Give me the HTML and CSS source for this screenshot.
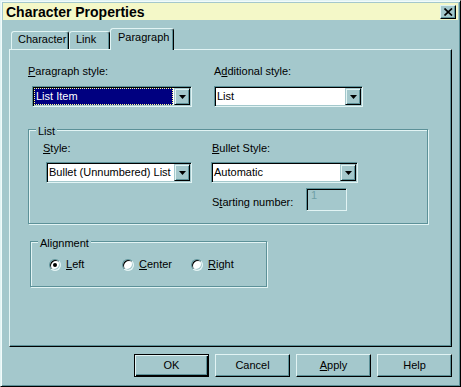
FILE: index.html
```html
<!DOCTYPE html>
<html>
<head>
<meta charset="utf-8">
<title>Character Properties</title>
<link rel="stylesheet" href="styles.css">
</head>
<body>
<div class="window">
  <div class="titlebar">
    <span class="title">Character Properties</span>
    <div class="close">
      <svg width="9" height="8" viewBox="0 0 9 8"><path d="M0.5 0.5 L8 7.5 M8 0.5 L0.5 7.5" stroke="#000" stroke-width="1.7" fill="none"/></svg>
    </div>
  </div>
  <div class="tabs">
    <div class="tab t-char">Character</div>
    <div class="tab t-link">Link</div>
    <div class="tab t-para active">Paragraph</div>
  </div>
  <div class="panel">
    <div class="row1">
      <div class="f-para">
        <div class="label"><u>P</u>aragraph style:</div>
        <div class="combo c-para">
          <span class="combo-text sel">List Item</span>
          <span class="combo-btn"><svg width="7" height="4" viewBox="0 0 7 4"><path d="M0 0 H7 L3.5 4 Z" fill="#000"/></svg></span>
        </div>
      </div>
      <div class="f-add">
        <div class="label">A<u>d</u>ditional style:</div>
        <div class="combo c-add">
          <span class="combo-text">List</span>
          <span class="combo-btn"><svg width="7" height="4" viewBox="0 0 7 4"><path d="M0 0 H7 L3.5 4 Z" fill="#000"/></svg></span>
        </div>
      </div>
    </div>
    <div class="group g-list">
      <span class="group-title">List</span>
      <div class="list-row">
        <div class="f-style">
          <div class="label"><u>S</u>tyle:</div>
          <div class="combo c-style">
            <span class="combo-text">Bullet (Unnumbered) List</span>
            <span class="combo-btn"><svg width="7" height="4" viewBox="0 0 7 4"><path d="M0 0 H7 L3.5 4 Z" fill="#000"/></svg></span>
          </div>
        </div>
        <div class="f-bullet">
          <div class="label"><u>B</u>ullet Style:</div>
          <div class="combo c-bullet">
            <span class="combo-text">Automatic</span>
            <span class="combo-btn"><svg width="7" height="4" viewBox="0 0 7 4"><path d="M0 0 H7 L3.5 4 Z" fill="#000"/></svg></span>
          </div>
          <div class="start-row">
            <div class="label start-label">S<u>t</u>arting number:</div>
            <div class="num">1</div>
          </div>
        </div>
      </div>
    </div>
    <div class="group g-align">
      <span class="group-title">Alignment</span>
      <div class="radios">
        <div class="radio-item ri-left"><span class="radio on"></span><span><u>L</u>eft</span></div>
        <div class="radio-item ri-center"><span class="radio"></span><span><u>C</u>enter</span></div>
        <div class="radio-item"><span class="radio"></span><span><u>R</u>ight</span></div>
      </div>
    </div>
  </div>
  <div class="buttons">
    <div class="btn default">OK</div>
    <div class="btn">Cancel</div>
    <div class="btn"><span><u>A</u>pply</span></div>
    <div class="btn">Help</div>
  </div>
</div>
</body>
</html>
```
FILE: styles.css
```css
:root {
  --face: #a4c8cc;
  --light: #e2f4f4;
  --shadow: #5c9198;
  --dark: #000000;
}

html, body {
  margin: 0;
  background: var(--face);
}

body {
  font-family: "Liberation Sans", Arial, sans-serif;
  font-size: 11px;
  line-height: 13px;
  color: #000;
}

u {
  text-decoration: underline;
  text-underline-offset: 1px;
}

.window {
  width: 461px;
  height: 387px;
  box-sizing: border-box;
  border: 1px solid;
  border-color: var(--light) var(--dark) var(--dark) var(--light);
  box-shadow: inset 1px 1px 0 #f2fbfb, inset -1px -1px 0 var(--shadow);
  padding: 2px;
  display: flex;
  flex-direction: column;
  background: var(--face);
}

.titlebar {
  height: 17px;
  flex: none;
  background: #f4f8c8;
  display: flex;
  align-items: center;
  justify-content: space-between;
  padding: 0 2px 0 3px;
}

.title {
  font-weight: bold;
  font-size: 14px;
  line-height: 17px;
  padding-top: 1px;
}

.close {
  width: 16px;
  height: 14px;
  box-sizing: border-box;
  background: var(--face);
  border: 1px solid;
  border-color: var(--light) var(--dark) var(--dark) var(--light);
  box-shadow: inset -1px -1px 0 var(--shadow);
  display: flex;
  align-items: center;
  justify-content: center;
}

.close svg {
  display: block;
}

.tabs {
  display: flex;
  align-items: flex-end;
  height: 21px;
  flex: none;
  margin-top: 8px;
  padding-left: 8px;
}

.tab {
  box-sizing: border-box;
  height: 18px;
  padding: 1px 0 0 6px;
  border: 1px solid;
  border-bottom: none;
  border-color: var(--light) var(--dark) transparent var(--light);
  border-radius: 3px 3px 0 0;
  box-shadow: inset -1px 0 0 var(--shadow);
  background: var(--face);
}

.t-char {
  width: 58px;
}

.t-link {
  width: 41px;
}

.t-para {
  width: 64px;
  height: 22px;
  margin-bottom: -1px;
  padding: 2px 0 0 7px;
  position: relative;
  z-index: 1;
}

.panel {
  margin: 0 6px;
  height: 298px;
  flex: none;
  box-sizing: border-box;
  border: 1px solid;
  border-color: var(--light) var(--dark) var(--dark) var(--light);
  box-shadow: inset -1px -1px 0 var(--shadow);
  padding: 15px 0 0 18px;
}

.row1 {
  display: flex;
}

.f-para {
  width: 186px;
}

.label {
  white-space: nowrap;
}

.combo {
  display: flex;
  height: 21px;
  box-sizing: border-box;
  border: 1px solid;
  border-color: var(--shadow) var(--light) var(--light) var(--shadow);
  box-shadow: inset 1px 1px 0 var(--dark), inset -1px -1px 0 var(--face);
  background: #fff;
  padding: 1px;
}

.combo-text {
  flex: 1;
  min-width: 0;
  padding-left: 1px;
  line-height: 17px;
  white-space: nowrap;
  overflow: hidden;
}

.combo-text.sel {
  background: #000080;
  color: #fff;
  border: 1px dotted #ffff90;
  line-height: 15px;
  padding-left: 1px;
  margin-right: 1px;
}

.combo-btn {
  width: 16px;
  height: 17px;
  flex: none;
  box-sizing: border-box;
  background: var(--face);
  border: 1px solid;
  border-color: var(--face) var(--dark) var(--dark) var(--face);
  box-shadow: inset 1px 1px 0 var(--light), inset -1px -1px 0 var(--shadow);
  display: flex;
  align-items: center;
  justify-content: center;
}

.combo-btn svg {
  display: block;
}

.c-para {
  width: 160px;
  margin: 8px 0 0 4px;
}

.c-add {
  width: 149px;
  margin-top: 8px;
}

.group {
  position: relative;
  box-sizing: border-box;
  border: 1px solid var(--shadow);
  box-shadow: inset 1px 1px 0 var(--light), 1px 1px 0 var(--light);
}

.group-title {
  position: absolute;
  top: -5px;
  left: 7px;
  padding: 0 2px;
  background: var(--face);
  line-height: 13px;
}

.g-list {
  margin-top: 22px;
  width: 400px;
  height: 95px;
  padding: 12px 0 0 14px;
}

.list-row {
  display: flex;
}

.f-style {
  width: 169px;
}

.c-style {
  width: 146px;
  margin: 7px 0 0 3px;
}

.c-bullet {
  width: 147px;
  margin: 7px 0 0 -1px;
}

.start-row {
  display: flex;
  align-items: flex-start;
  margin-top: 5px;
}

.start-label {
  width: 94px;
  padding-top: 8px;
}

.num {
  width: 41px;
  height: 23px;
  box-sizing: border-box;
  border: 1px solid;
  border-color: var(--shadow) var(--light) var(--light) var(--shadow);
  box-shadow: inset 1px 1px 0 var(--dark), inset -1px -1px 0 var(--face);
  padding: 1px 0 0 4px;
  line-height: 11px;
  color: #6fa0a6;
}

.g-align {
  margin: 17px 0 0 2px;
  width: 237px;
  height: 46px;
  padding: 16px 0 0 18px;
}

.radios {
  display: flex;
}

.radio-item {
  display: flex;
  align-items: center;
  gap: 5px;
}

.ri-left {
  width: 73px;
}

.ri-center {
  width: 69px;
}

.radio {
  width: 12px;
  height: 12px;
  flex: none;
  box-sizing: border-box;
  border-radius: 50%;
  background: #fff;
  border: 1px solid;
  border-color: var(--shadow) var(--light) var(--light) var(--shadow);
  box-shadow: inset 1px 1px 0 var(--dark), inset -1px -1px 0 var(--face);
  display: flex;
  align-items: center;
  justify-content: center;
}

.radio.on::after {
  content: "";
  width: 4px;
  height: 4px;
  border-radius: 50%;
  background: #000;
}

.buttons {
  display: flex;
  justify-content: flex-end;
  gap: 6px;
  margin: 7px 6px 0 0;
  flex: none;
}

.btn {
  width: 75px;
  height: 23px;
  box-sizing: border-box;
  border: 1px solid;
  border-color: var(--light) var(--dark) var(--dark) var(--light);
  box-shadow: inset -1px -1px 0 var(--shadow);
  background: var(--face);
  display: flex;
  align-items: center;
  justify-content: center;
}

.btn.default {
  border-color: var(--dark);
  box-shadow: inset 1px 1px 0 var(--light), inset -1px -1px 0 var(--dark), inset -2px -2px 0 var(--shadow);
}
```
